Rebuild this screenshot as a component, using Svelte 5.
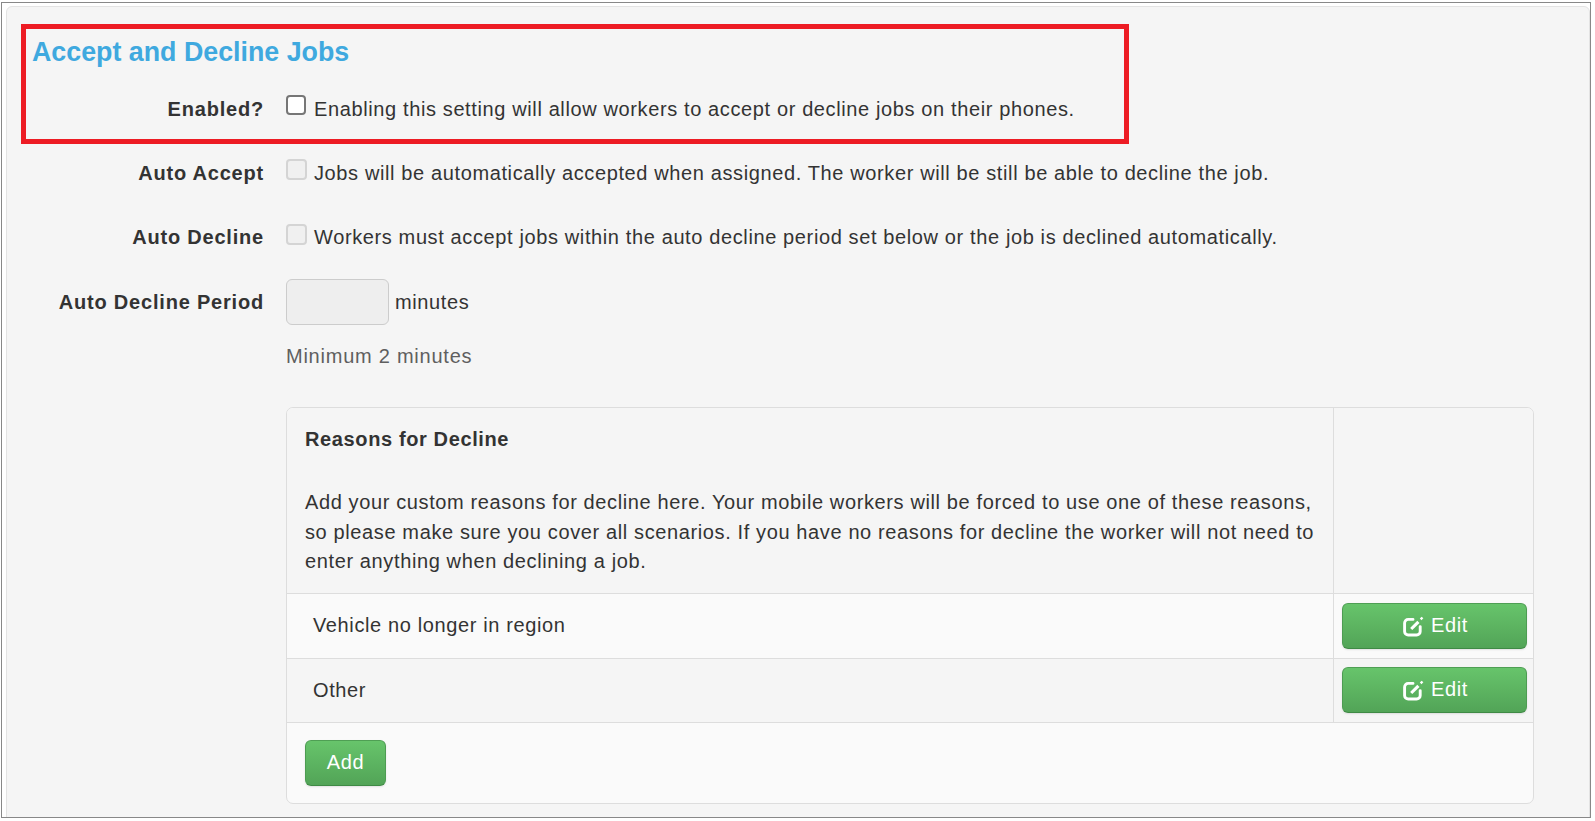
<script>
	const settings = [
		{ label: 'Auto Accept', text: 'Jobs will be automatically accepted when assigned. The worker will be still be able to decline the job.' },
		{ label: 'Auto Decline', text: 'Workers must accept jobs within the auto decline period set below or the job is declined automatically.' }
	];

	const reasons = ['Vehicle no longer in region', 'Other'];
</script>

<div class="frame">
	<div class="well">
		<!-- annotated box from the screenshot -->
		<div class="highlight">
			<h2>Accept and Decline Jobs</h2>
			<div class="row first">
				<span class="label">Enabled?</span>
				<div class="field">
					<input type="checkbox" class="check" />
					<span class="txt">Enabling this setting will allow workers to accept or decline jobs on their phones.</span>
				</div>
			</div>
		</div>

		{#each settings as s, i}
			<div class="row" class:nudge={i === 0}>
				<span class="label">{s.label}</span>
				<div class="field">
					<span class="check off"></span>
					<span class="txt">{s.text}</span>
				</div>
			</div>
		{/each}

		<div class="row period">
			<span class="label">Auto Decline Period</span>
			<div class="field">
				<span class="minutes-input"></span>
				<span>minutes</span>
			</div>
		</div>
		<p class="hint">Minimum 2 minutes</p>

		<div class="panel">
			<div class="intro">
				<div class="intro-text">
					<strong>Reasons for Decline</strong>
					<p>Add your custom reasons for decline here. Your mobile workers will be forced to use one of these reasons, so please make sure you cover all scenarios. If you have no reasons for decline the worker will not need to enter anything when declining a job.</p>
				</div>
				<div class="side"></div>
			</div>
			{#each reasons as reason, i}
				<div class="reason" class:odd={i % 2 === 1}>
					<div class="reason-name">{reason}</div>
					<div class="side">
						<button class="btn edit">
							<svg viewBox="0 0 20 20" width="24" height="24" aria-hidden="true">
								<path d="M10 4.5H6a3 3 0 0 0-3 3v7a3 3 0 0 0 3 3h7a3 3 0 0 0 3-3v-4" fill="none" stroke="currentColor" stroke-width="2.4" stroke-linecap="round" />
								<path d="M8.5 12.5l6-6" fill="none" stroke="currentColor" stroke-width="2.6" />
								<path d="M16.4 4.4l1.5-1.5" fill="none" stroke="currentColor" stroke-width="2" />
							</svg>
							<span class="btn-text">Edit</span>
						</button>
					</div>
				</div>
			{/each}
			<div class="footer">
				<button class="btn add">Add</button>
			</div>
		</div>
	</div>
</div>

<style>
	:global(body) {
		margin: 0;
		background: #fff;
		font-family: 'Liberation Sans', Arial, sans-serif;
		color: #333;
	}

	.frame {
		width: 1590px;
		height: 816px;
		box-sizing: border-box;
		margin-left: 1px;
		margin-top: 2px;
		border: 1px solid #888;
		padding: 3px 0 0 4px;
		overflow: hidden;
		font-size: 20px;
		line-height: 27px;
	}

	.well {
		height: 830px;
		box-sizing: border-box;
		background: #f5f5f5;
		border: 1px solid #e3e3e3;
		border-radius: 6px;
		padding: 17px 0 0 14px;
	}

	.highlight {
		width: 1108px;
		height: 120px;
		box-sizing: border-box;
		border: 5px solid #ed1c24;
	}

	h2 {
		margin: 5px 0 0 6px;
		font-size: 26.8px;
		line-height: 36px;
		font-weight: bold;
		color: #3fa9df;
	}

	.row {
		display: flex;
		height: 64.5px;
		align-items: flex-start;
	}

	.highlight + .row {
		margin-top: 15px;
	}

	.highlight .row {
		margin-top: 25px;
		margin-left: -5px;
		height: 27px;
	}

	.first .label,
	.nudge .label,
	.first .txt,
	.nudge .txt {
		padding-top: 1px;
	}

	.label {
		width: 243px;
		flex: none;
		text-align: right;
		font-weight: bold;
		letter-spacing: 0.8px;
	}

	.field {
		display: flex;
		align-items: flex-start;
		margin-left: 22px;
		letter-spacing: 0.62px;
	}

	.check {
		appearance: none;
		display: block;
		width: 20px;
		height: 20px;
		box-sizing: border-box;
		margin: 0 8px 0 0;
		background: #fff;
		border: 2px solid #767676;
		border-radius: 4px;
	}

	.check.off {
		width: 21px;
		height: 21px;
		margin-right: 7px;
		background: #f0f0f0;
		border-color: #d4d4d4;
	}

	.minutes-input {
		display: block;
		width: 103px;
		height: 46px;
		box-sizing: border-box;
		margin: -10px 6px 0 0;
		background: #eee;
		border: 1px solid #ccc;
		border-radius: 6px;
	}

	.period {
		height: 38px;
		margin-top: 1px;
	}

	.hint {
		margin: 16px 0 0 265px;
		color: #5f5f5f;
		letter-spacing: 0.76px;
	}

	.panel {
		width: 1246px;
		margin: 37px 0 0 265px;
		background: #fafafa;
		border: 1px solid #ddd;
		border-radius: 7px;
		overflow: hidden;
	}

	.intro {
		display: flex;
		height: 185px;
		background: #f5f5f5;
	}

	.intro-text {
		flex: 1;
		padding: 18px 17px 0 18px;
		letter-spacing: 0.62px;
	}

	.intro-text p {
		margin: 35px 0 0;
		line-height: 29.5px;
	}

	.side {
		width: 200px;
		flex: none;
		border-left: 1px solid #ddd;
		box-sizing: border-box;
		padding: 9px 0 0 8px;
	}

	.reason {
		display: flex;
		height: 65px;
		box-sizing: border-box;
		border-top: 1px solid #ddd;
		background: #fafafa;
	}

	.reason.odd {
		height: 64px;
		background: #f5f5f5;
	}

	.reason.odd .side {
		padding-top: 8px;
	}

	.reason-name {
		flex: 1;
		padding: 18px 0 0 26px;
		letter-spacing: 0.62px;
	}

	.footer {
		border-top: 1px solid #ddd;
		padding: 17px 18px 17px;
	}

	.btn {
		display: inline-flex;
		align-items: center;
		justify-content: center;
		box-sizing: border-box;
		padding: 0;
		height: 46px;
		color: #fff;
		font: inherit;
		letter-spacing: 0.6px;
		background: linear-gradient(#67c46b, #52a457);
		border: 1px solid;
		border-color: #4f9f54 #4d9c52 #3f8a45;
		border-radius: 6px;
		box-shadow: 0 1px 2px rgba(0, 0, 0, 0.1);
	}

	.btn-text {
		padding-bottom: 2px;
	}

	.edit {
		width: 185px;
		gap: 6px;
	}

	.add {
		width: 81px;
		padding-bottom: 2px;
	}
</style>
